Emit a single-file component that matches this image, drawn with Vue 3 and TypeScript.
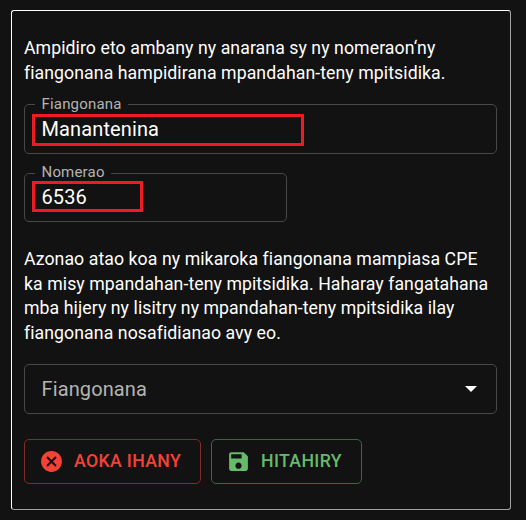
<script setup lang="ts">
import { ref } from 'vue'

const congregation = ref('Manantenina')
const code = ref('6536')
</script>

<template>
  <main class="page">
    <section class="card">
      <p class="copy intro">
        Ampidiro eto ambany ny anarana sy ny nomeraon‘ny<br />
        fiangonana hampidirana mpandahan-teny mpitsidika.
      </p>

      <fieldset class="field name">
        <legend>Fiangonana</legend>
        <div class="mark">{{ congregation }}</div>
      </fieldset>

      <fieldset class="field number">
        <legend>Nomerao</legend>
        <div class="mark">{{ code }}</div>
      </fieldset>

      <p class="copy search">
        Azonao atao koa ny mikaroka fiangonana mampiasa CPE<br />
        ka misy mpandahan-teny mpitsidika. Haharay fangatahana<br />
        mba hijery ny lisitry ny mpandahan-teny mpitsidika ilay<br />
        fiangonana nosafidianao avy eo.
      </p>

      <div class="select">
        <span>Fiangonana</span>
        <svg viewBox="0 0 12 6"><path d="M0 0h12L6 6z" /></svg>
      </div>

      <div class="actions">
        <button class="btn cancel" type="button">
          <svg viewBox="0 0 24 24">
            <path d="M12 2C6.47 2 2 6.47 2 12s4.47 10 10 10 10-4.47 10-10S17.53 2 12 2zm5 13.59L15.59 17 12 13.41 8.41 17 7 15.59 10.59 12 7 8.41 8.41 7 12 10.59 15.59 7 17 8.41 13.41 12 17 15.59z" />
          </svg>
          <span>AOKA IHANY</span>
        </button>
        <button class="btn save" type="button">
          <svg viewBox="0 0 24 24">
            <path d="M17 3H5c-1.11 0-2 .9-2 2v14c0 1.1.89 2 2 2h14c1.1 0 2-.9 2-2V7l-4-4zm-5 16c-1.66 0-3-1.34-3-3s1.34-3 3-3 3 1.34 3 3-1.34 3-3 3zm3-10H5V5h10v4z" />
          </svg>
          <span>HITAHIRY</span>
        </button>
      </div>
    </section>
  </main>
</template>

<style>
body {
  background: #121212;
}
</style>

<style scoped>
* {
  box-sizing: border-box;
}
.page {
  height: 520px;
  padding: 10px 15px 10px 11px;
  background: #121212;
  color: #fff;
  font-family: Roboto, sans-serif;
}
.card {
  display: flex;
  flex-direction: column;
  align-items: flex-start;
  height: 500px;
  padding: 25px 13px 0 12px;
  border: 1px solid;
  border-color: #fff #a0a0a0 #a0a0a0 #fff;
  border-radius: 3px;
}
.copy {
  margin: 0;
  font-size: 17.7px;
  line-height: 24.5px;
  letter-spacing: 0.07px;
  white-space: nowrap;
}
.field {
  min-width: 0;
  margin: 0;
  padding: 0 0 0 7px;
  border: 1px solid #484848;
  border-radius: 5px;
}
.field legend {
  height: 16px;
  margin-left: 3px;
  padding: 0 6.5px;
  color: #b4b4b4;
  font-size: 15px;
  line-height: 16px;
  letter-spacing: 0.18px;
}
.name {
  width: 473px;
  height: 58px;
  margin-top: 11px;
}
.number {
  width: 263px;
  height: 57px;
  margin-top: 11px;
}
.number legend {
  line-height: 14px;
}
.mark {
  height: 32px;
  margin-top: 2px;
  padding-left: 6.5px;
  border: 3px solid #ed1c24;
  font-size: 20px;
  line-height: 24px;
  letter-spacing: 0.12px;
}
.name .mark {
  width: 272px;
}
.number .mark {
  width: 111px;
  height: 31px;
  margin-top: 0;
  line-height: 27px;
}
.search {
  margin-top: 25px;
}
.select {
  display: flex;
  align-items: center;
  justify-content: space-between;
  width: 473px;
  height: 50px;
  margin-top: 19px;
  padding: 0 19px 0 16.5px;
  border: 1px solid #484848;
  border-radius: 5px;
  color: #b4b4b4;
  font-size: 20px;
  letter-spacing: 0.12px;
}
.select svg {
  width: 12px;
  height: 6px;
  fill: #fff;
}
.actions {
  display: flex;
  gap: 10px;
  margin-top: 25px;
}
.btn {
  display: flex;
  align-items: center;
  height: 45px;
  padding: 0 0 0 14px;
  background: transparent;
  border: 1px solid;
  border-radius: 5px;
  font: 500 17.7px/24px Roboto, sans-serif;
  letter-spacing: 0.35px;
  white-space: nowrap;
}
.btn svg {
  width: 25px;
  height: 25px;
  margin-right: 10px;
  fill: currentColor;
}
.btn span {
  padding-bottom: 2px;
}
.cancel {
  width: 177px;
  color: #f44336;
  border-color: #832b26;
}
.save {
  width: 151px;
  color: #66bb6a;
  border-color: #3c673e;
}
</style>
